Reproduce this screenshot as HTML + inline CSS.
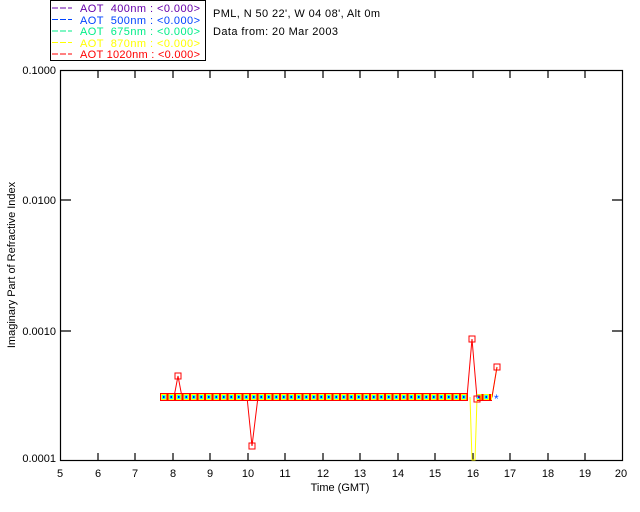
<!DOCTYPE html><html><head><style>body{margin:0;background:#fff}svg{display:block;font-family:"Liberation Sans",sans-serif}</style></head><body>
<svg width="640" height="512" viewBox="0 0 640 512">
<defs><pattern id="p" x="160" y="393" width="7.5" height="8" patternUnits="userSpaceOnUse">
<rect x="0" y="0" width="7.5" height="8" fill="#ff0000"/>
<rect x="1" y="1" width="5.5" height="6" fill="#ffff00"/>
<rect x="2" y="2" width="3.5" height="4" fill="#00ffff"/>
<rect x="3" y="3" width="1.5" height="2" fill="#0000ff"/>
</pattern></defs>
<rect x="50.5" y="0.5" width="155" height="60" fill="none" stroke="#000"/>
<g font-size="11">
<line x1="52" y1="8" x2="72" y2="8" stroke="#6600aa" stroke-dasharray="6,2"/><text x="80" y="12" fill="#6600aa" xml:space="preserve" textLength="120">AOT  400nm : &lt;0.000&gt;</text>
<line x1="52" y1="19.5" x2="72" y2="19.5" stroke="#0044ff" stroke-dasharray="6,2"/><text x="80" y="24" fill="#0044ff" xml:space="preserve" textLength="120">AOT  500nm : &lt;0.000&gt;</text>
<line x1="52" y1="31" x2="72" y2="31" stroke="#00ee88" stroke-dasharray="6,2"/><text x="80" y="35" fill="#00ee88" xml:space="preserve" textLength="120">AOT  675nm : &lt;0.000&gt;</text>
<line x1="52" y1="42.5" x2="72" y2="42.5" stroke="#ffff00" stroke-dasharray="6,2"/><text x="80" y="47" fill="#ffff00" xml:space="preserve" textLength="120">AOT  870nm : &lt;0.000&gt;</text>
<line x1="52" y1="54" x2="72" y2="54" stroke="#ff0000" stroke-dasharray="6,2"/><text x="80" y="58" fill="#ff0000" xml:space="preserve" textLength="120">AOT 1020nm : &lt;0.000&gt;</text>
<text x="213" y="17" fill="#000" textLength="167">PML, N 50 22', W 04 08', Alt 0m</text>
<text x="213" y="35" fill="#000" textLength="125">Data from: 20 Mar 2003</text>
</g>
<rect x="60.5" y="70.5" width="562" height="390" fill="none" stroke="#000" stroke-width="1.2"/>
<g stroke="#000" stroke-width="1.2">
<path d="M98 461v-8M135 461v-8M173 461v-8M210 461v-8M248 461v-8M285 461v-8M323 461v-8M360 461v-8M398 461v-8M435 461v-8M473 461v-8M510 461v-8M548 461v-8M585 461v-8"/>
<path d="M98 70v8M135 70v8M173 70v8M210 70v8M248 70v8M285 70v8M323 70v8M360 70v8M398 70v8M435 70v8M473 70v8M510 70v8M548 70v8M585 70v8"/>
<path d="M60 200h11M60 331h11M623 200h-11M623 331h-11"/>
</g>
<g font-size="11" fill="#000">
<text x="56" y="74" text-anchor="end">0.1000</text>
<text x="56" y="204" text-anchor="end">0.0100</text>
<text x="56" y="335" text-anchor="end">0.0010</text>
<text x="56" y="462" text-anchor="end">0.0001</text>
<g text-anchor="middle">
<text x="60" y="477">5</text><text x="98" y="477">6</text><text x="135" y="477">7</text><text x="173" y="477">8</text><text x="210" y="477">9</text><text x="248" y="477">10</text><text x="285" y="477">11</text><text x="323" y="477">12</text><text x="360" y="477">13</text><text x="398" y="477">14</text><text x="435" y="477">15</text><text x="473" y="477">16</text><text x="510" y="477">17</text><text x="548" y="477">18</text><text x="585" y="477">19</text><text x="621" y="477">20</text>
<text x="340" y="491">Time (GMT)</text>
<text transform="translate(15,265) rotate(-90)">Imaginary Part of Refractive Index</text>
</g></g>
<polyline points="470,397 472,460 475,460 477,399" fill="none" stroke="#ffff00"/>
<polyline points="492,397 497,367" fill="none" stroke="#ffff00"/>
<polyline points="174,397 178,376 182,397" fill="none" stroke="#ff0000"/>
<polyline points="247,397 252,446 258,397" fill="none" stroke="#ff0000"/>
<polyline points="467,397 472,339 477,398 492,397 497,367" fill="none" stroke="#ff0000"/>
<rect x="160" y="393" width="308" height="8" fill="url(#p)"/>
<rect x="477" y="394" width="15" height="7" fill="url(#p)"/>
<g fill="none" stroke="#ff0000">
<rect x="175" y="373" width="6" height="6"/><rect x="249" y="443" width="6" height="6"/>
<rect x="469" y="336" width="6" height="6"/><rect x="494" y="364" width="6" height="6"/><rect x="474" y="396" width="6" height="6"/>
</g>
<text x="494" y="403" fill="#0044ff" font-size="12">*</text>
</svg></body></html>
